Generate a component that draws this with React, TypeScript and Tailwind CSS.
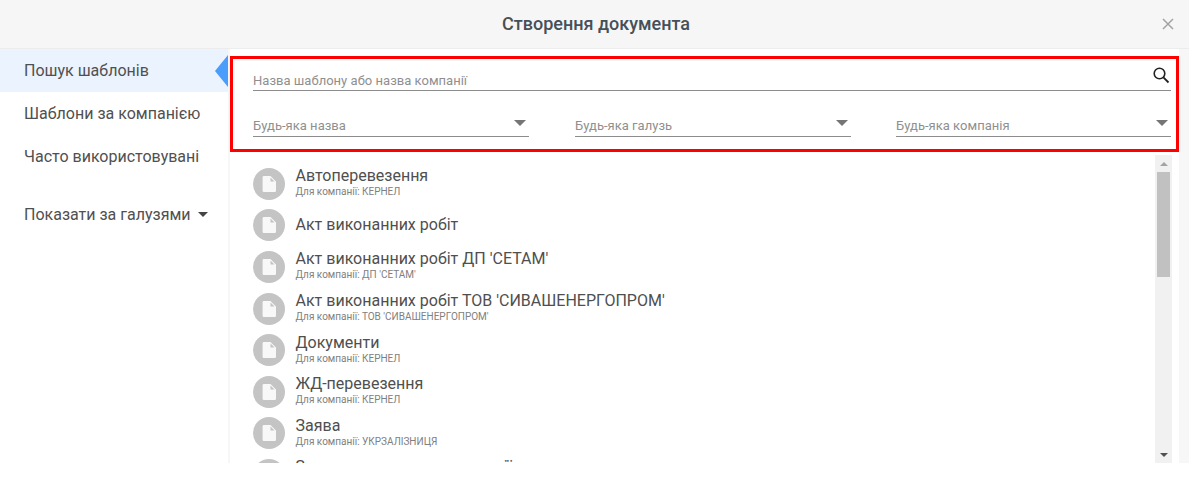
const templates = [
  { name: "Автоперевезення", company: "КЕРНЕЛ" },
  { name: "Акт виконанних робіт" },
  { name: "Акт виконанних робіт ДП 'СЕТАМ'", company: "ДП 'СЕТАМ'" },
  { name: "Акт виконанних робіт ТОВ 'СИВАШЕНЕРГОПРОМ'", company: "ТОВ 'СИВАШЕНЕРГОПРОМ'" },
  { name: "Документи", company: "КЕРНЕЛ" },
  { name: "ЖД-перевезення", company: "КЕРНЕЛ" },
  { name: "Заява", company: "УКРЗАЛІЗНИЦЯ" },
  { name: "Замовлення послуг компанії", company: "КЕРНЕЛ" },
];

function DocIcon() {
  return (
    <div className="flex h-8 w-8 shrink-0 items-center justify-center rounded-full bg-[#c4c4c4]">
      <svg width="16" height="18" viewBox="0 0 16 18">
        <path d="M2.8 1h6.7L15 6.5v9.3a1.2 1.2 0 0 1-1.2 1.2H2.8a1.2 1.2 0 0 1-1.2-1.2V2.2A1.2 1.2 0 0 1 2.8 1z" fill="#f8f8f8" />
        <path d="M9.5 2.5L13.5 6.5H9.5z" fill="#c4c4c4" />
      </svg>
    </div>
  );
}

function FilterSelect({ label, className }: { label: string; className: string }) {
  return (
    <div className={`flex h-[22px] shrink-0 items-center justify-between border-b border-[#8c8c8c] ${className}`}>
      <span className="text-[13px] tracking-[0.02px] text-[#8f8f8f]">{label}</span>
      <div className="mr-[3px] mb-[6px] h-0 w-0 border-x-[6px] border-t-[6px] border-x-transparent border-t-[#757575]" />
    </div>
  );
}

export default function App() {
  return (
    <div className="h-[491px] w-[1189px] overflow-hidden bg-white font-['Roboto',sans-serif]">
      <header className="relative flex h-[49px] items-center justify-center border-b border-[#ececec] bg-[#f6f6f6]">
        <h1 className="ml-[3px] pb-[2px] text-[18px] font-medium text-[#455058]">Створення документа</h1>
        <svg className="absolute right-[15px] top-[18px]" width="12" height="12" viewBox="0 0 12 12">
          <path d="M1 1l10 10M11 1L1 11" stroke="#a3a3a3" strokeWidth="1.5" />
        </svg>
      </header>

      <div className="flex h-[414px]">
        <aside className="w-[228px] shrink-0 text-[16px] text-[#505050]">
          <div className="relative flex h-[43px] items-center bg-[#eaf3fe] pl-6">
            Пошук шаблонів
            <div className="absolute right-0 top-[6px] h-0 w-0 border-y-[16px] border-r-[13px] border-y-transparent border-r-[#4b9dfb]" />
          </div>
          <div className="flex h-[43px] items-center pl-6">Шаблони за компанією</div>
          <div className="flex h-[43px] items-center pl-6">Часто використовувані</div>
          <div className="mt-[15px] flex h-[43px] items-center gap-[7px] pl-6">
            Показати за галузями
            <div className="h-0 w-0 border-x-[5px] border-t-[5px] border-x-transparent border-t-[#444]" />
          </div>
        </aside>

        <main className="flex min-w-0 flex-1 bg-[#f7f7f7] pl-[5px]">
          <div className="-ml-[3px] mr-[10px] flex min-w-0 flex-1 flex-col bg-white">
            <section className="z-10 mt-[7px] h-[96px] border-[3px] border-[#ff0000] bg-white pl-5 pr-[5px] pt-[3px]">
              <div className="flex h-[29px] items-center justify-between border-b border-[#8c8c8c]">
                <span className="pt-[9px] text-[13px] tracking-[0.02px] text-[#8f8f8f]">Назва шаблону або назва компанії</span>
                <svg className="-mt-[2px]" width="20" height="20" viewBox="0 0 20 20" fill="none">
                  <circle cx="8.5" cy="8.5" r="5.3" stroke="#222" strokeWidth="1.6" />
                  <path d="M12.4 12.4L17.5 17.5" stroke="#222" strokeWidth="1.8" />
                </svg>
              </div>
              <div className="mt-6 flex">
                <FilterSelect label="Будь-яка назва" className="w-[276px]" />
                <FilterSelect label="Будь-яка галузь" className="ml-[46px] w-[276px]" />
                <FilterSelect label="Будь-яка компанія" className="ml-[45px] w-[275px]" />
              </div>
            </section>

            <div className="flex h-[311px] min-h-0 pt-[3px]">
              <div className="min-w-0 flex-1 overflow-hidden pl-[23px] pt-[8px]">
                {templates.map((t) => (
                  <div key={t.name} className="flex h-[41.6px] items-center gap-[10.5px]">
                    <DocIcon />
                    <div className={t.company ? "min-w-0 pb-[2px]" : "min-w-0"}>
                      <div className="text-[16px] leading-[18px] text-[#4f4f4f]">{t.name}</div>
                      {t.company && <div className="text-[10px] leading-[13px] text-[#808080]">Для компанії: {t.company}</div>}
                    </div>
                  </div>
                ))}
              </div>
              <div className="mr-[7px] flex w-[17px] shrink-0 flex-col items-center bg-[#f1f1f1]">
                <div className="flex h-[17px] items-center justify-center">
                  <div className="h-0 w-0 border-x-[4px] border-b-[4px] border-x-transparent border-b-[#a3a3a3]" />
                </div>
                <div className="h-[105px] w-[13px] bg-[#c1c1c1]" />
                <div className="flex-1" />
                <div className="flex h-[17px] items-center justify-center">
                  <div className="h-0 w-0 border-x-[4px] border-t-[4px] border-x-transparent border-t-[#505050]" />
                </div>
              </div>
            </div>
          </div>
        </main>
      </div>
    </div>
  );
}
